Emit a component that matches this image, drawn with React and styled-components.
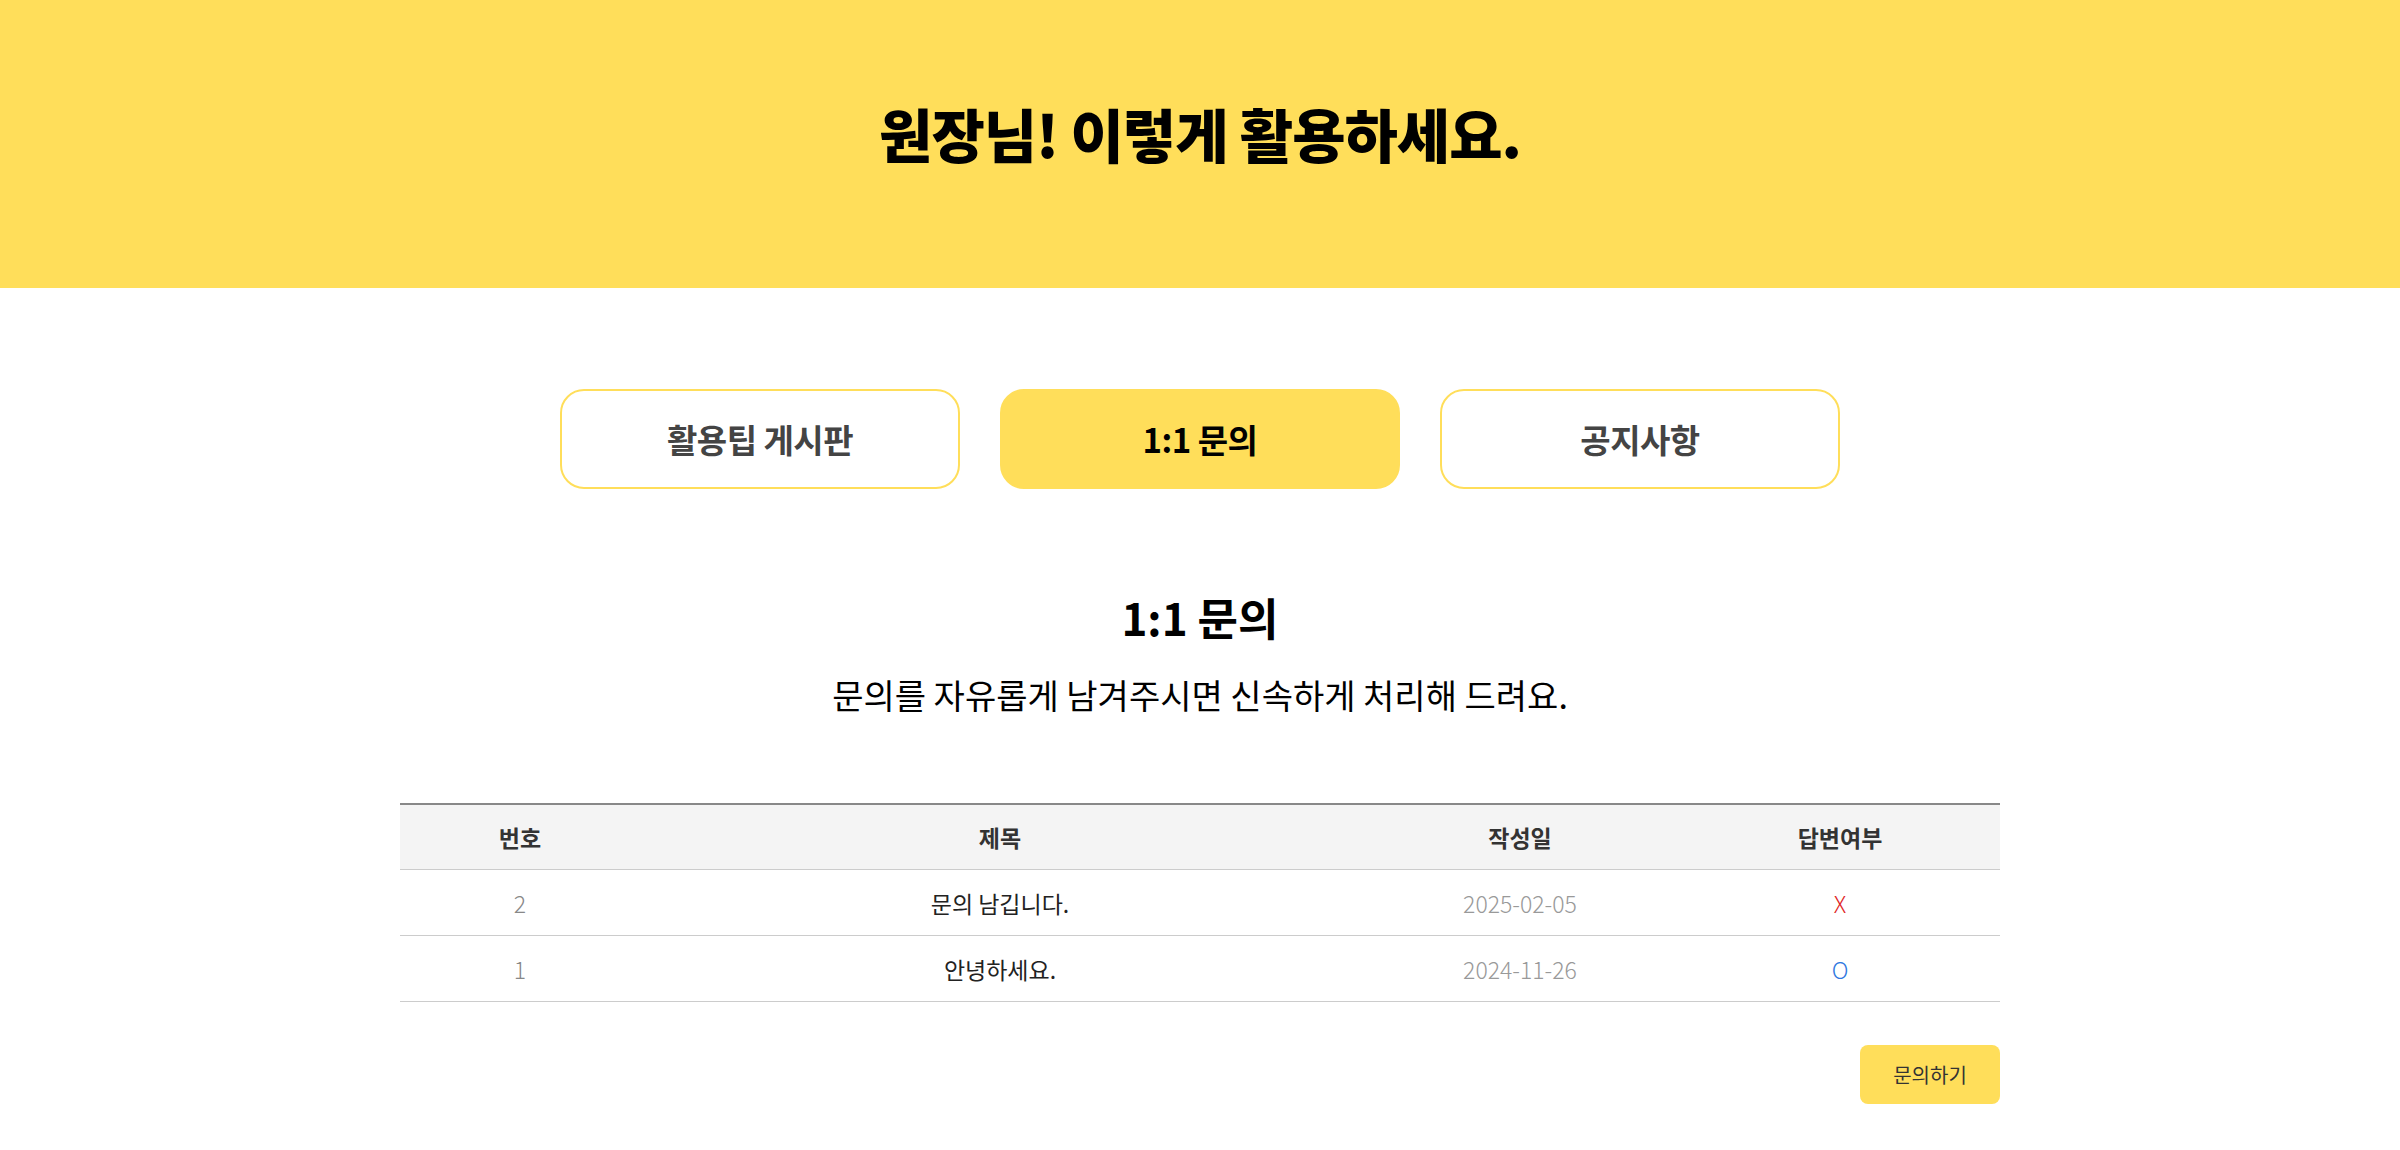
import React from 'react';
import styled, { createGlobalStyle } from 'styled-components';

const GlobalStyle = createGlobalStyle`
  body {
    margin: 0;
    background: #fff;
    font-family: "Noto Sans CJK KR", "Noto Sans", sans-serif;
    color: #111;
  }
`;

const YELLOW = '#ffde5a';

const Hero = styled.header`
  height: 288px;
  background: ${YELLOW};
  display: flex;
  align-items: center;
  justify-content: center;
  padding-bottom: 22px;
  box-sizing: border-box;
`;

const HeroTitle = styled.h1`
  margin: 0;
  font-size: 58px;
  font-weight: 900;
  letter-spacing: -1px;
  color: #000;
`;

const Main = styled.main`
  width: 1600px;
  margin: 0 auto;
  padding-top: 101px;
  padding-bottom: 46px;
`;

const Tabs = styled.nav`
  display: flex;
  justify-content: center;
  gap: 40px;
`;

const Tab = styled.button`
  width: 400px;
  height: 100px;
  border-radius: 24px;
  border: 2px solid ${YELLOW};
  background: ${(p) => (p.$active ? YELLOW : '#fff')};
  color: ${(p) => (p.$active ? '#000' : '#444')};
  font-family: inherit;
  font-size: 33px;
  font-weight: 700;
  letter-spacing: -0.5px;
  cursor: pointer;
`;

const Intro = styled.section`
  text-align: center;
  margin-top: 98px;
`;

const SectionTitle = styled.h2`
  margin: 0;
  font-size: 44px;
  font-weight: 700;
  line-height: 60px;
  color: #000;
`;

const SectionDesc = styled.p`
  margin: 24px 0 0;
  font-size: 34px;
  font-weight: 400;
  line-height: 48px;
  color: #000;
`;

const Table = styled.table`
  width: 100%;
  margin-top: 84px;
  border-collapse: collapse;
  border-top: 2px solid #888;
  table-layout: fixed;
`;

const Th = styled.th`
  width: ${(p) => p.$w};
  height: 64px;
  padding: 0;
  background: #f4f4f4;
  border-bottom: 1px solid #cccccc;
  font-size: 23px;
  font-weight: 700;
  color: #333;
  text-align: center;
`;

const Td = styled.td`
  height: 65px;
  padding: 0;
  border-bottom: 1px solid #cccccc;
  font-size: 23px;
  font-weight: ${(p) => (p.$light ? 300 : 400)};
  color: ${(p) => p.$color || '#222'};
  text-align: center;
`;

const Mark = styled.span`
  font-size: 23px;
  font-weight: 300;
  color: ${(p) => (p.$ok ? '#2f78e0' : '#e01e24')};
`;

const Actions = styled.div`
  display: flex;
  justify-content: flex-end;
  margin-top: 43px;
`;

const WriteButton = styled.button`
  width: 140px;
  height: 59px;
  border: 0;
  border-radius: 8px;
  background: ${YELLOW};
  color: #333;
  font-family: inherit;
  font-size: 20px;
  cursor: pointer;
`;

const rows = [
  { no: 2, title: '문의 남깁니다.', date: '2025-02-05', answered: false },
  { no: 1, title: '안녕하세요.', date: '2024-11-26', answered: true },
];

export default function App() {
  return (
    <>
      <GlobalStyle />
      <Hero>
        <HeroTitle>원장님! 이렇게 활용하세요.</HeroTitle>
      </Hero>
      <Main>
        <Tabs>
          <Tab>활용팁 게시판</Tab>
          <Tab $active>1:1 문의</Tab>
          <Tab>공지사항</Tab>
        </Tabs>
        <Intro>
          <SectionTitle>1:1 문의</SectionTitle>
          <SectionDesc>문의를 자유롭게 남겨주시면 신속하게 처리해 드려요.</SectionDesc>
        </Intro>
        <Table>
          <thead>
            <tr>
              <Th $w="15%">번호</Th>
              <Th $w="45%">제목</Th>
              <Th $w="20%">작성일</Th>
              <Th $w="20%">답변여부</Th>
            </tr>
          </thead>
          <tbody>
            {rows.map((r) => (
              <tr key={r.no}>
                <Td $color="#888" $light>{r.no}</Td>
                <Td>{r.title}</Td>
                <Td $color="#999" $light>{r.date}</Td>
                <Td>
                  <Mark $ok={r.answered}>{r.answered ? 'O' : 'X'}</Mark>
                </Td>
              </tr>
            ))}
          </tbody>
        </Table>
        <Actions>
          <WriteButton>문의하기</WriteButton>
        </Actions>
      </Main>
    </>
  );
}
